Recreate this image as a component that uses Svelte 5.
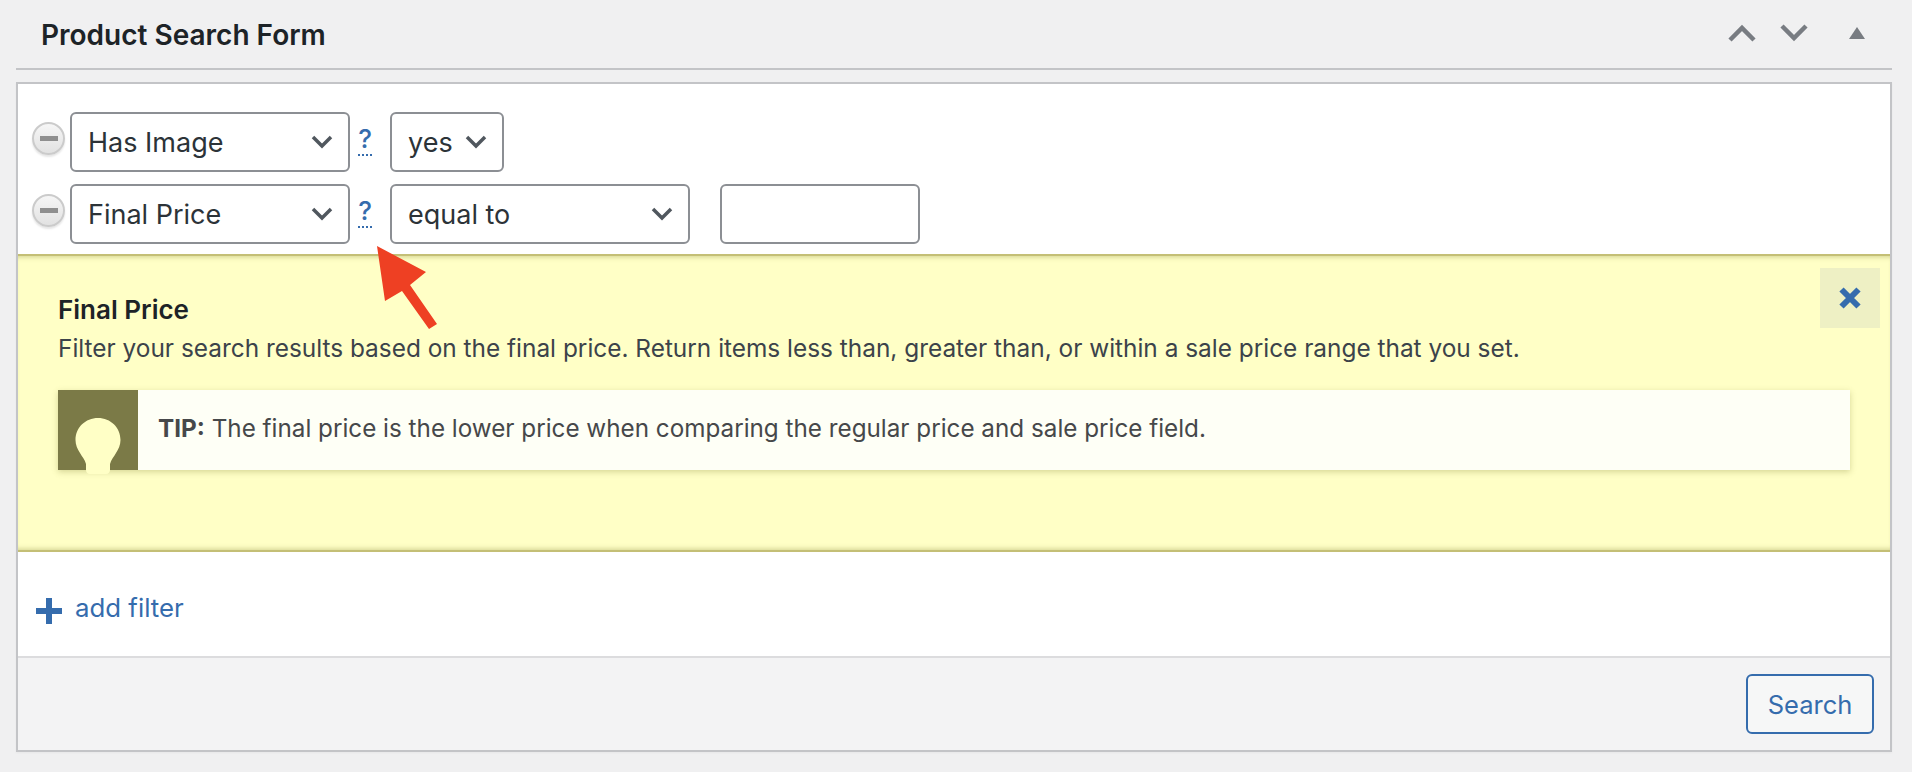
<script>
	const rows = [
		{ field: 'Has Image', op: 'yes', opWidth: 'short', hasInput: false },
		{ field: 'Final Price', op: 'equal to', opWidth: 'wide', hasInput: true }
	];
</script>

<div class="page">
	<header class="head">
		<h2>Product Search Form</h2>
		<div class="head-actions">
			<svg class="chev" width="28" height="18" viewBox="0 0 28 18"><path d="M2 16 14 4l12 12" /></svg>
			<svg class="chev" width="28" height="18" viewBox="0 0 28 18"><path d="M2 2l12 12L26 2" /></svg>
			<svg class="tri" width="16" height="12" viewBox="0 0 16 12"><path d="M8 0l8 12H0z" /></svg>
		</div>
	</header>

	<section class="box">
		<div class="filters">
			{#each rows as row}
				<div class="row">
					<span class="minus"><span></span></span>
					<div class="select field">
						<span>{row.field}</span>
						<svg width="22" height="14" viewBox="0 0 22 14"><path d="M2 2l9 9 9-9" /></svg>
					</div>
					<a class="help" href="#help">?</a>
					<div class="select {row.opWidth}">
						<span>{row.op}</span>
						<svg width="22" height="14" viewBox="0 0 22 14"><path d="M2 2l9 9 9-9" /></svg>
					</div>
					{#if row.hasInput}
						<div class="input"></div>
					{/if}
				</div>
			{/each}
		</div>

		<div class="help-panel">
			<button class="close" aria-label="Close">
				<svg width="24" height="24" viewBox="0 0 24 24"><path d="M3.5 3.5l17 17M20.5 3.5l-17 17" /></svg>
			</button>
			<h3>Final Price</h3>
			<p>Filter your search results based on the final price. Return items less than, greater than, or within a sale price range that you set.</p>
			<div class="tip">
				<div class="tip-icon">
					<svg width="46" height="56" viewBox="0 0 46 56">
						<path d="M23 0C10.500 0 .5 9.500.5 22c0 5 2 9 4.500 13 2 3.500 5 7 6 11v6c0 2 1.500 4 4 4h16c2.500 0 4-2 4-4v-6c1-4 4-7.500 6-11 2.500-4 4.500-8 4.500-13C45.500 9.500 35.500 0 23 0z" />
					</svg>
				</div>
				<p><strong>TIP:</strong> The final price is the lower price when comparing the regular price and sale price field.</p>
			</div>
		</div>

		<div class="add">
			<svg width="26" height="26" viewBox="0 0 26 26"><path d="M10 0h6v10h10v6H16v10h-6V16H0v-6h10z" /></svg>
			<a href="#add">add filter</a>
		</div>

		<footer class="foot">
			<button class="search">Search</button>
		</footer>

		<svg class="arrow" width="61" height="84" viewBox="0 0 61 84">
			<path d="M0 0 49 26 33 39 60 78 52 83 25 45 8 55z" />
		</svg>
	</section>
</div>

<style>
	:global(body) {
		margin: 0;
		background: #f0f0f1;
		font-family: Inter, 'Liberation Sans', sans-serif;
		color: #3c434a;
	}

	.page {
		width: 1876px;
		padding: 0 20px 20px 16px;
	}

	.head {
		display: flex;
		justify-content: space-between;
		align-items: center;
		height: 68px;
		padding: 0 27px 0 25px;
		border-bottom: 2px solid #c3c4c7;
	}

	h2 {
		margin: 1px 0 0;
		font-size: 28px;
		font-weight: 600;
		color: #1d2327;
	}

	.head-actions {
		display: flex;
		align-items: center;
		gap: 24px;
		margin-top: -2px;
	}

	.chev path {
		fill: none;
		stroke: #787c82;
		stroke-width: 4.5;
	}

	.tri {
		margin-left: 17px;
	}

	.tri path {
		fill: #787c82;
	}

	.box {
		position: relative;
		margin-top: 12px;
		background: #fff;
		border: 2px solid #c3c4c7;
		box-shadow: 0 1px 2px rgba(0, 0, 0, 0.04);
	}

	.filters {
		display: flex;
		flex-direction: column;
		gap: 12px;
		padding: 28px 0 10px 14px;
	}

	.row {
		display: flex;
		align-items: center;
		height: 60px;
	}

	.minus {
		display: flex;
		align-items: center;
		justify-content: center;
		flex: none;
		width: 33px;
		height: 33px;
		margin: -7px 5px 0 0;
		border-radius: 50%;
		border: 2px solid #cbcbcb;
		background: linear-gradient(#f6f6f6, #e2e2e2);
		box-sizing: border-box;
		box-shadow: 0 2px 2px rgba(0, 0, 0, 0.1);
	}

	.minus span {
		width: 18px;
		height: 5px;
		background: #8f8f8f;
	}

	.select,
	.input {
		box-sizing: border-box;
		height: 60px;
		border: 2px solid #8c8f94;
		border-radius: 6px;
		background: #fff;
	}

	.select {
		display: flex;
		align-items: center;
		justify-content: space-between;
		padding: 0 15px 0 16px;
		font-size: 27px;
		color: #2c3338;
	}

	.select svg path {
		fill: none;
		stroke: #50575e;
		stroke-width: 3.5;
	}

	.field {
		width: 280px;
	}

	.short {
		width: 114px;
	}

	.wide {
		width: 300px;
	}

	.input {
		width: 200px;
		margin-left: 30px;
	}

	.help {
		width: 14px;
		margin: -4px 18px 0 8px;
		font-size: 26px;
		font-weight: 500;
		line-height: 30px;
		text-align: center;
		color: #356cad;
		text-decoration: none;
		border-bottom: 2px dotted #356cad;
	}

	.help-panel {
		position: relative;
		box-sizing: border-box;
		height: 298px;
		padding: 38px 40px 0 40px;
		background: #ffffc6;
		border-top: 2px solid #c4bf76;
		border-bottom: 2px solid #c4bf76;
		box-shadow: inset 0 5px 5px -4px rgba(120, 120, 40, 0.35), inset 0 -5px 5px -4px rgba(120, 120, 40, 0.35);
	}

	.close {
		position: absolute;
		top: 12px;
		right: 10px;
		display: flex;
		align-items: center;
		justify-content: center;
		width: 60px;
		height: 60px;
		padding: 0;
		border: 0;
		background: #eef0c4;
	}

	.close path {
		fill: none;
		stroke: #356cad;
		stroke-width: 6;
	}

	h3 {
		margin: 0;
		font-size: 26px;
		line-height: 32px;
		font-weight: 600;
		color: #1d2327;
	}

	.help-panel > p {
		margin: 6px 0 0;
		font-size: 24.4px;
		line-height: 32px;
		color: #3c434a;
	}

	.tip {
		display: flex;
		align-items: center;
		height: 80px;
		margin-top: 26px;
		background: #fefff6;
		box-shadow: 0 2px 6px rgba(120, 120, 40, 0.3);
	}

	.tip-icon {
		display: flex;
		align-items: flex-end;
		justify-content: center;
		flex: none;
		width: 80px;
		height: 80px;
		background: #7b7a47;
	}

	.tip-icon svg {
		margin-bottom: -4px;
	}

	.tip-icon path {
		fill: #ffffc6;
	}

	.tip p {
		margin: -3px 0 0 20px;
		font-size: 24.25px;
		color: #46484a;
	}

	.add {
		box-sizing: border-box;
		display: flex;
		align-items: center;
		gap: 13px;
		height: 104px;
		padding: 7px 0 0 18px;
	}

	.add svg {
		margin-top: 6px;
	}

	.add path {
		fill: #356cad;
	}

	.add a {
		font-size: 25.8px;
		color: #356cad;
		text-decoration: none;
	}

	.foot {
		display: flex;
		justify-content: flex-end;
		align-items: center;
		height: 92px;
		padding-right: 16px;
		background: #f3f3f4;
		border-top: 2px solid #dcdcde;
	}

	.search {
		width: 128px;
		height: 60px;
		padding: 0;
		border: 2px solid #356cad;
		border-radius: 6px;
		background: #f6f7f7;
		font-family: inherit;
		font-size: 25.5px;
		color: #356cad;
	}

	.arrow {
		position: absolute;
		top: 162px;
		left: 359px;
	}

	.arrow path {
		fill: #ee4023;
	}
</style>
